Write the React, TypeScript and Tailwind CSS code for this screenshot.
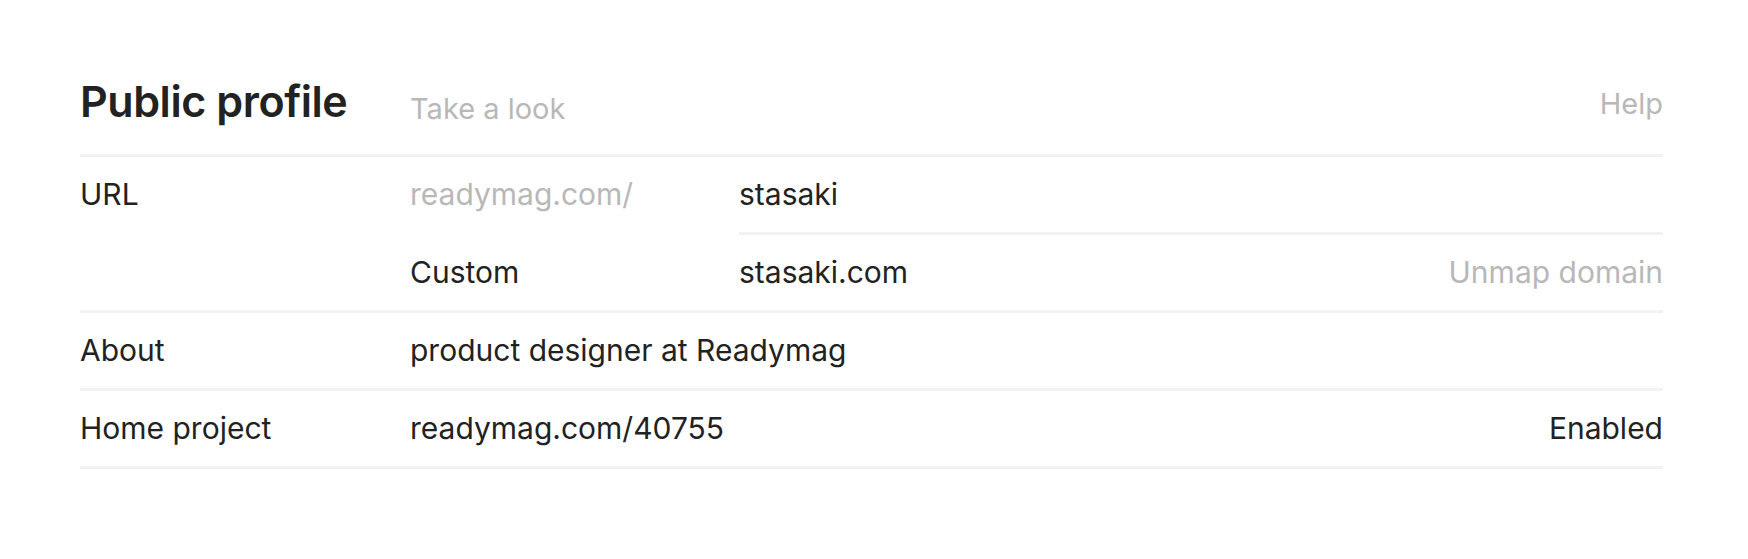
export default function App() {
  return (
    <main
      className="min-h-screen bg-white text-[#222222]"
      style={{ fontFamily: "Inter, 'Noto Sans', sans-serif" }}
    >
      <section className="pl-[80px] pr-[85px] pt-[80px]">
        {/* Header */}
        <div className="flex items-end border-b-[3px] border-[#f2f2f2] pb-[31px]">
          <h1 className="w-[330px] text-[43px] leading-none font-semibold tracking-[-0.01em]">
            Public profile
          </h1>
          <span className="text-[29px] leading-none text-[#b8b8b8]">Take a look</span>
          <span className="ml-auto mb-[5px] text-[29px] leading-none text-[#b8b8b8]">Help</span>
        </div>

        {/* URL */}
        <div className="flex border-b-[3px] border-[#f2f2f2] text-[30px]">
          <div className="w-[330px] h-[75px] flex items-center">URL</div>
          <div className="flex-1 flex flex-col">
            <div className="flex h-[78px]">
              <div className="w-[329px] flex items-center pb-[3px] text-[#b8b8b8]">readymag.com/</div>
              <div className="flex-1 flex items-center border-b-[3px] border-[#f2f2f2]">stasaki</div>
            </div>
            <div className="flex h-[75px] items-center">
              <div className="w-[329px]">Custom</div>
              <div className="flex-1 flex items-center justify-between">
                <span>stasaki.com</span>
                <span className="text-[#b8b8b8]">Unmap domain</span>
              </div>
            </div>
          </div>
        </div>

        {/* About */}
        <div className="flex h-[78px] items-center border-b-[3px] border-[#f2f2f2] text-[30px]">
          <div className="w-[330px]">About</div>
          <div>product designer at Readymag</div>
        </div>

        {/* Home project */}
        <div className="flex h-[78px] items-center border-b-[3px] border-[#f2f2f2] text-[30px]">
          <div className="w-[330px]">Home project</div>
          <div>readymag.com/40755</div>
          <div className="ml-auto">Enabled</div>
        </div>
      </section>
    </main>
  );
}
